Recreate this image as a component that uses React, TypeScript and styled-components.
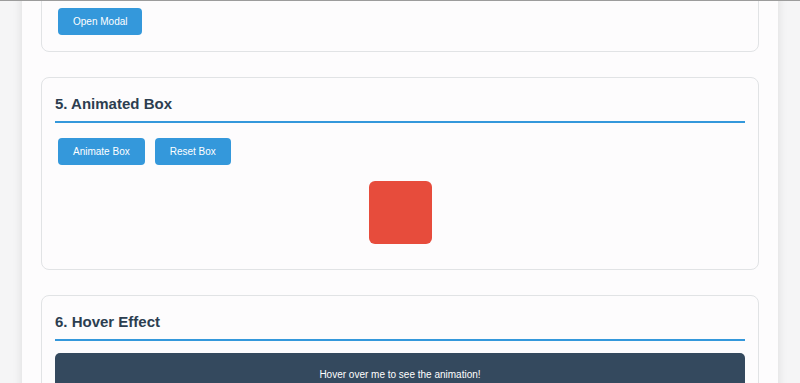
import styled, { createGlobalStyle } from 'styled-components'

const GlobalStyle = createGlobalStyle`
  html, body {
    margin: 0;
    padding: 0;
  }
  body {
    background: #f5f5f6;
    border-top: 1px solid #9c9c9c;
    font-family: 'Liberation Sans', Arial, sans-serif;
    overflow: hidden;
  }
`

const Page = styled.main`
  width: 718px;
  margin: -15px auto 0;
  padding: 0 19px 40px;
  background: #fdfcfd;
  box-shadow: 0 0 10px rgba(0, 0, 0, 0.1);
`

const Card = styled.section`
  border: 1px solid #e1e3e5;
  border-radius: 8px;
  padding: 17px 13px 13px;
  margin-bottom: 25px;
  background: #fdfcfd;
`

const Title = styled.h2`
  margin: 0 0 12px;
  padding-bottom: 9px;
  font-size: 15px;
  line-height: 17px;
  font-weight: bold;
  color: #2c3e50;
  border-bottom: 2px solid #3498db;
`

const ButtonRow = styled.div`
  display: flex;
  gap: 4px;
  margin-top: 1px;
`

const Button = styled.button`
  margin: 3px;
  padding: 8px 15px;
  font-family: inherit;
  font-size: 10px;
  line-height: 11px;
  color: #fff;
  background: #3498db;
  border: none;
  border-radius: 4px;
  cursor: pointer;
`

const AnimatedBox = styled.div<{ $color: string }>`
  width: 63px;
  height: 63px;
  margin: 13px auto 12px;
  border-radius: 6px;
  background: ${(p) => p.$color};
`

const HoverPanel = styled.div`
  padding: 16px 15px 15px;
  border-radius: 5px;
  background: #34495e;
  color: #fff;
  font-size: 10px;
  line-height: 12px;
  text-align: center;
`

const App = () => {
  return (
    <>
      <GlobalStyle />
      <Page>
        {/* the page is scrolled: only the bottom of the modal card shows */}
        <Card>
          <ButtonRow>
            <Button>Open Modal</Button>
          </ButtonRow>
        </Card>

        <Card>
          <Title>5. Animated Box</Title>
          <ButtonRow>
            <Button>Animate Box</Button>
            <Button>Reset Box</Button>
          </ButtonRow>
          <AnimatedBox $color="#e74c3c" />
        </Card>

        <Card>
          <Title>6. Hover Effect</Title>
          <HoverPanel>Hover over me to see the animation!</HoverPanel>
        </Card>
      </Page>
    </>
  )
}

export default App
